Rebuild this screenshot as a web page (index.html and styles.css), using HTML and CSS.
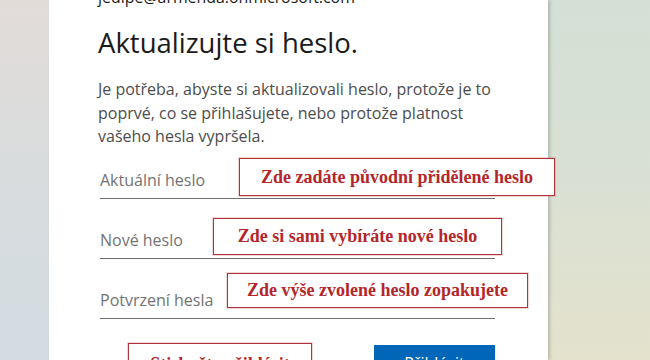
FILE: index.html
```html
<!DOCTYPE html>
<html lang="cs">
<head>
<meta charset="utf-8">
<title>Aktualizujte si heslo</title>
<link rel="stylesheet" href="styles.css">
</head>
<body>
<div class="page">
  <div class="side side-left"></div>
  <main class="card">
    <div class="email">jedipe@armenda.onmicrosoft.com</div>
    <h1 class="title">Aktualizujte si heslo.</h1>
    <p class="desc">Je potřeba, abyste si aktualizovali heslo, protože je to<br>poprvé, co se přihlašujete, nebo protože platnost<br>vašeho hesla vypršela.</p>
    <div class="fields">
      <div class="field"><span class="placeholder">Aktuální heslo</span></div>
      <div class="field"><span class="placeholder">Nové heslo</span></div>
      <div class="field"><span class="placeholder">Potvrzení hesla</span></div>
    </div>
    <div class="actions">
      <button class="btn">Přihlásit</button>
    </div>
  </main>
  <div class="side side-right"></div>

  <div class="note note-1">Zde zadáte původní přidělené heslo</div>
  <div class="note note-2">Zde si sami vybíráte nové heslo</div>
  <div class="note note-3">Zde výše zvolené heslo zopakujete</div>
  <div class="note note-4">Stiskněte přihlásit</div>
</div>
</body>
</html>
```

FILE: styles.css
```css
html, body {
  margin: 0;
  padding: 0;
}
body {
  width: 650px;
  height: 360px;
  overflow: hidden;
  font-family: "Segoe UI", "Open Sans", "Noto Sans", sans-serif;
}
.page {
  position: relative;
  display: flex;
  width: 650px;
  height: 360px;
  overflow: hidden;
}
.side-left {
  width: 49px;
  flex: none;
  background: linear-gradient(180deg, #e2dcd9 0%, #d9dcdd 45%, #d2dce2 100%);
}
.side-right {
  flex: 1;
  background: linear-gradient(180deg, #d4e0d6 0%, #d9e0d3 50%, #e4e2cd 100%);
}
.card {
  width: 450px;
  flex: none;
  background: #fff;
  padding-left: 49px;
  box-shadow: 2px 0 3px rgba(0,0,0,0.18);
  position: relative;
  z-index: 1;
}
.email {
  margin-top: -13px;
  font-size: 15.9px;
  line-height: 20px;
  color: #1b1b1b;
}
.title {
  margin: 17px 0 0;
  font-size: 27.5px;
  font-weight: 400;
  line-height: 37px;
  color: #1b1b1b;
}
.desc {
  margin: 17px 0 0;
  font-size: 16px;
  line-height: 23.5px;
  color: #4d4d4d;
}
.fields {
  margin-top: 13px;
  margin-left: 2px;
  width: 395px;
  display: flex;
  flex-direction: column;
  gap: 23px;
}
.field {
  height: 36px;
  border-bottom: 1px solid #6e6e6e;
  display: flex;
  align-items: center;
}
.placeholder {
  font-size: 16px;
  color: #737373;
}
.actions {
  margin-top: 26px;
  width: 397px;
  display: flex;
  justify-content: flex-end;
}
.btn {
  width: 121px;
  height: 36px;
  border: none;
  background: #0067b8;
  color: #fff;
  font-family: inherit;
  font-size: 16px;
  padding: 0;
}
.note {
  position: absolute;
  z-index: 2;
  background: #fff;
  border: 1px solid #b0343a;
  box-shadow: 0 0 0 1px rgba(200, 90, 90, 0.25);
  color: #b3262a;
  font-family: "Liberation Serif", "DejaVu Serif", serif;
  font-weight: 700;
  font-size: 18px;
  display: flex;
  align-items: center;
  justify-content: center;
  box-sizing: border-box;
}
.note-1 { left: 239px; top: 158px; width: 316px; height: 38px; }
.note-2 { left: 213px; top: 218px; width: 289px; height: 37px; }
.note-3 { left: 227px; top: 273px; width: 301px; height: 35px; }
.note-4 { left: 128px; top: 343px; width: 184px; height: 36px; align-items: flex-start; padding-top: 10px; line-height: 20px; }
```
